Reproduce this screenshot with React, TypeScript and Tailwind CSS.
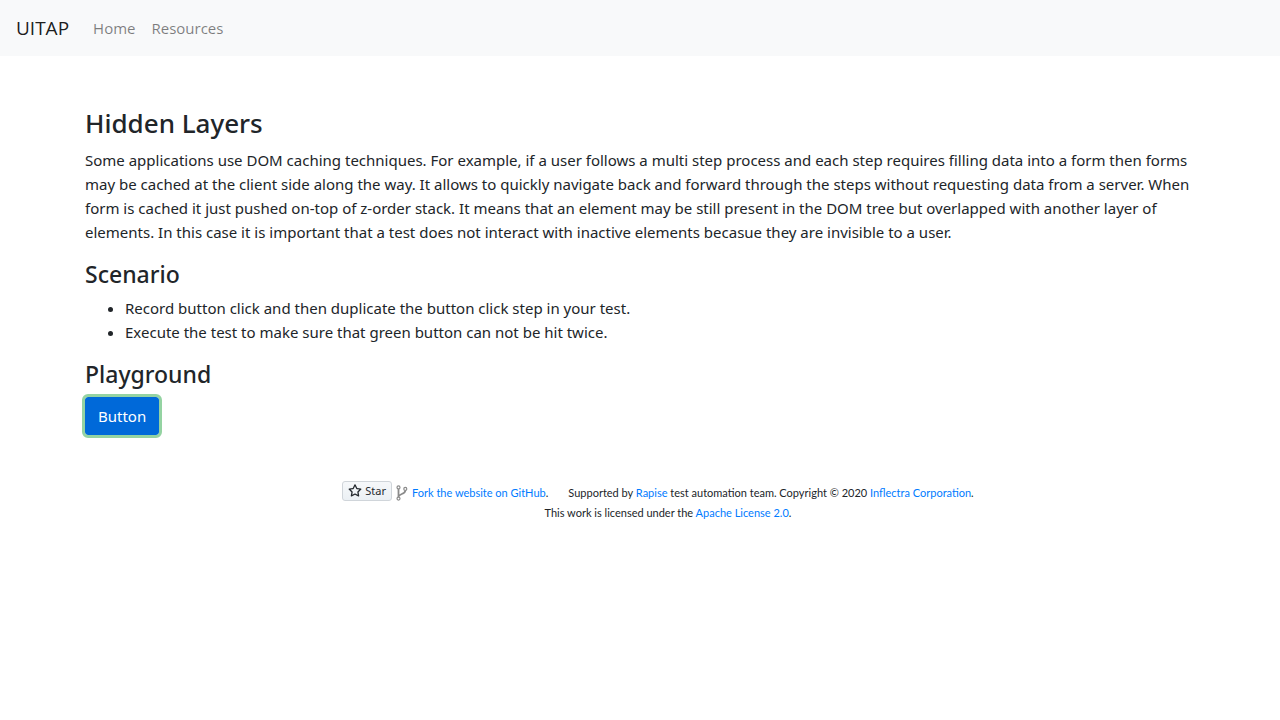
import React from "react";

const linkClass = "text-[#007bff] hover:underline";

function StarIcon() {
  return (
    <svg viewBox="0 0 16 16" className="size-3.5 fill-[#24292f]" aria-hidden="true">
      <path d="M8 .25a.75.75 0 0 1 .673.418l1.882 3.815 4.21.612a.75.75 0 0 1 .416 1.279l-3.046 2.97.719 4.192a.75.75 0 0 1-1.088.791L8 12.347l-3.766 1.98a.75.75 0 0 1-1.088-.79l.72-4.194L.818 6.374a.75.75 0 0 1 .416-1.28l4.21-.611L7.327.668A.75.75 0 0 1 8 .25Zm0 2.445L6.615 5.5a.75.75 0 0 1-.564.41l-3.097.45 2.24 2.184a.75.75 0 0 1 .216.664l-.528 3.084 2.769-1.456a.75.75 0 0 1 .698 0l2.77 1.456-.53-3.084a.75.75 0 0 1 .216-.664l2.24-2.183-3.096-.45a.75.75 0 0 1-.564-.41L8 2.694Z" />
    </svg>
  );
}

function ForkIcon() {
  return (
    <svg viewBox="0 0 12 16" className="mx-1 h-4 w-3 fill-none stroke-[#8a8a8a]" aria-hidden="true">
      <circle cx="2.5" cy="2.4" r="1.5" strokeWidth="1.2" />
      <circle cx="2.5" cy="13.6" r="1.5" strokeWidth="1.2" />
      <circle cx="9.3" cy="3.9" r="1.5" strokeWidth="1.2" />
      <path d="M2.5 4v8M9.3 5.5c0 3.9-6 3-6.6 5.9" strokeWidth="1.8" />
    </svg>
  );
}

export default function App() {
  return (
    <div className="font-['Noto_Sans',sans-serif] text-[15px] leading-6 text-[#212529]">
      <nav className="flex h-14 items-center bg-[#f8f9fa] px-4">
        <a href="#" className="mr-4 font-['Open_Sans',sans-serif] text-[19px] text-black/90">UITAP</a>
        <a href="#" className="px-2 font-['Open_Sans',sans-serif] text-black/50">Home</a>
        <a href="#" className="px-2 font-['Open_Sans',sans-serif] text-black/50">Resources</a>
      </nav>
      <main className="mx-auto max-w-[1140px] px-[15px] pt-[51px]">
        <h3 className="mb-2 text-[26px] font-medium leading-[33px]">Hidden Layers</h3>
        <p className="mb-4">
          Some applications use DOM caching techniques. For example, if a user follows a multi step process and each step requires filling data into a form then forms may be cached at the client side along the way. It allows to quickly navigate back and forward through the steps without requesting data from a server. When form is cached it just pushed on-top of z-order stack. It means that an element may be still present in the DOM tree but overlapped with another layer of elements. In this case it is important that a test does not interact with inactive elements becasue they are invisible to a user.
        </p>
        <h4 className="mb-2 text-[23px] font-medium leading-7">Scenario</h4>
        <ul className="mb-4 list-disc pl-10">
          <li>Record button click and then duplicate the button click step in your test.</li>
          <li>Execute the test to make sure that green button can not be hit twice.</li>
        </ul>
        <h4 className="mb-2 text-[23px] font-medium leading-[29px]">Playground</h4>
        <button type="button" className="block h-[38px] rounded-[3px] bg-[#0069d9] px-[13px] text-white outline-3 outline-[#94d3a2]">Button</button>
      </main>
      <footer className="mt-[46px] font-['Lato',sans-serif] text-[11px] leading-5">
        <div className="flex items-start justify-center pl-9">
          <a href="#" className="flex h-5 items-center gap-[3px] rounded-[3px] border border-[#d0d5da] bg-linear-to-b from-[#f6f8fa] to-[#ebf0f4] px-[5px] font-['Noto_Sans',sans-serif] text-[#24292f]"><StarIcon />Star</a>
          <div className="flex items-center pt-0.5">
            <ForkIcon />
            <span><a href="#" className={linkClass}>Fork the website on GitHub</a>.</span>
            <span className="ml-5">Supported by <a href="#" className={linkClass}>Rapise</a> test automation team. Copyright © 2020 <a href="#" className={linkClass}>Inflectra Corporation</a>.</span>
          </div>
        </div>
        <p className="pl-14 text-center">This work is licensed under the <a href="#" className={linkClass}>Apache License 2.0</a>.</p>
      </footer>
    </div>
  );
}
